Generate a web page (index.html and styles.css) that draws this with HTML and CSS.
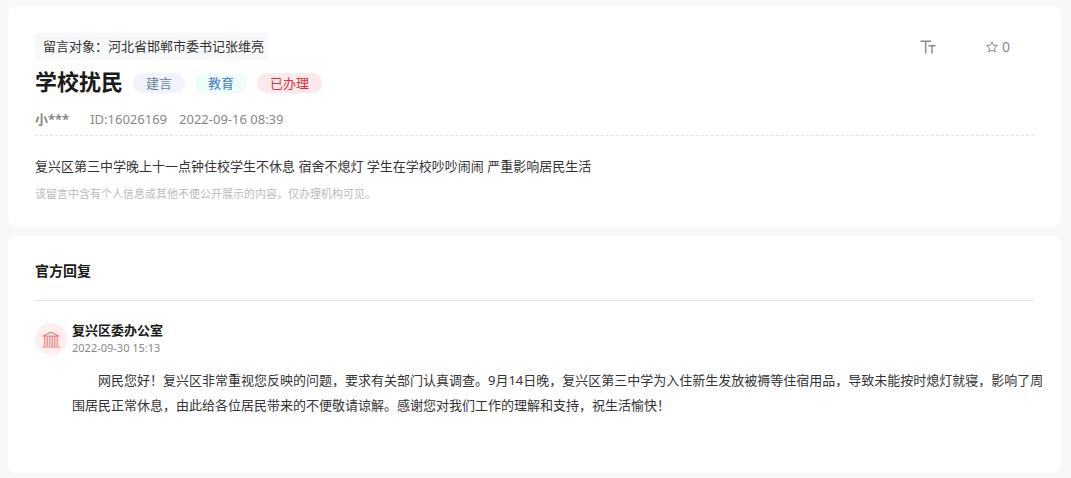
FILE: index.html
```html
<!DOCTYPE html>
<html lang="zh-CN">
<head>
    <meta charset="UTF-8">
    <meta name="viewport" content="width=device-width, initial-scale=1.0">
    <title>学校扰民</title>
    <link rel="stylesheet" href="styles.css">
</head>
<body>
    <main class="page">
        <section class="card message">
            <div class="message-top">
                <p class="target">留言对象：河北省邯郸市委书记张维亮</p>
                <div class="tools">
                    <button type="button" class="tool-btn" aria-label="字号">
                        <svg width="16" height="14" viewBox="0 0 16 14" fill="none" stroke="currentColor" stroke-width="1.4">
                            <path d="M0.5 1.2H11M5.7 1.2V13.5M8.5 5.7H15.5M12 5.7V13.5"/>
                        </svg>
                    </button>
                    <button type="button" class="tool-btn tool-star" aria-label="收藏">
                        <svg width="12" height="12" viewBox="0 0 12 12" fill="none" stroke="currentColor" stroke-linejoin="round">
                            <path d="M6 0.8L7.6 4.1L11.3 4.6L8.6 7.1L9.3 10.9L6 9.1L2.7 10.9L3.4 7.1L0.7 4.6L4.4 4.1Z"/>
                        </svg>
                        <span>0</span>
                    </button>
                </div>
            </div>
            <div class="title-row">
                <h1>学校扰民</h1>
                <span class="tag tag-type">建言</span>
                <span class="tag tag-field">教育</span>
                <span class="tag tag-state">已办理</span>
            </div>
            <div class="meta">
                <span class="user">小***</span>
                <span>ID:16026169</span>
                <span>2022-09-16 08:39</span>
            </div>
            <p class="message-text">复兴区第三中学晚上十一点钟住校学生不休息 宿舍不熄灯 学生在学校吵吵闹闹 严重影响居民生活</p>
            <p class="notice">该留言中含有个人信息或其他不便公开展示的内容，仅办理机构可见。</p>
        </section>

        <section class="card reply">
            <h2>官方回复</h2>
            <div class="reply-item">
                <div class="avatar">
                    <svg width="18" height="17" viewBox="0 0 18 17" fill="none" stroke="currentColor" stroke-width="1.2">
                        <path d="M0.8 5.2L9 1.2L17.2 5.2ZM0 16H18"/>
                        <path d="M2.8 5.5V15.5M5.2 5.5V15.5M7.8 5.5V15.5M10.2 5.5V15.5M12.8 5.5V15.5M15.2 5.5V15.5"/>
                    </svg>
                </div>
                <div class="reply-body">
                    <h3>复兴区委办公室</h3>
                    <time class="reply-time" datetime="2022-09-30T15:13">2022-09-30 15:13</time>
                    <p class="reply-text">网民您好！复兴区非常重视您反映的问题，要求有关部门认真调查。9月14日晚，复兴区第三中学为入住新生发放被褥等住宿用品，导致未能按时熄灯就寝，影响了周围居民正常休息，由此给各位居民带来的不便敬请谅解。感谢您对我们工作的理解和支持，祝生活愉快！</p>
                </div>
            </div>
        </section>
    </main>
</body>
</html>
```
FILE: styles.css
```css
body {
    margin: 0;
    background-color: #f7f8fa;
    font-family: "Noto Sans", "Noto Sans CJK SC", sans-serif;
    font-size: 13px;
    line-height: 20px;
    color: #333;
}

h1, h2, h3, p {
    margin: 0;
}

.page {
    padding: 6px 10px 5px 8px;
    display: flex;
    flex-direction: column;
    gap: 9px;
}

.card {
    background-color: #fff;
    border-radius: 8px;
    padding: 27px;
}

.message {
    padding-bottom: 23px;
}

.message-top {
    display: flex;
    justify-content: space-between;
    align-items: center;
}

.target {
    padding: 3px 4px 4px 8px;
    background-color: #f7f8fa;
    border-radius: 2px;
}

.tools {
    display: flex;
    gap: 50px;
    padding-right: 24px;
}

.tool-btn {
    display: flex;
    align-items: center;
    gap: 4px;
    padding: 0;
    border: none;
    background: none;
    color: #888;
    font: inherit;
    cursor: pointer;
}

.tool-star {
    font-size: 14px;
}

.title-row {
    display: flex;
    align-items: center;
    gap: 10px;
    margin-top: 7px;
}

h1 {
    padding-bottom: 4px;
    font-size: 22px;
    line-height: 28px;
    color: #1a1a1a;
}

.tag {
    padding: 0 13px;
    border-radius: 10px;
}

.tag-type {
    background-color: #f0f4fa;
    color: #6d7f9b;
}

.tag-field {
    background-color: #edfdfa;
    color: #3f78c9;
}

.tag-state {
    background-color: #fce9eb;
    color: #d9333f;
}

.meta {
    display: flex;
    gap: 12px;
    margin-top: 10px;
    padding-bottom: 6px;
    border-bottom: 1px dashed #e3e3e3;
    color: #888;
}

.user {
    margin-right: 9px;
    font-weight: bold;
}

.message-text {
    margin-top: 20px;
}

.notice {
    margin-top: 8px;
    font-size: 11px;
    color: #bbb;
}

h2 {
    padding-bottom: 19px;
    border-bottom: 1px solid #e5e5e5;
    font-size: 14px;
    color: #1a1a1a;
}

.reply {
    padding-top: 25px;
    padding-bottom: 55px;
}

.reply-item {
    display: flex;
    gap: 5px;
    margin-top: 19px;
}

.avatar {
    display: flex;
    flex: none;
    align-items: center;
    justify-content: center;
    width: 32px;
    height: 32px;
    margin-top: 3px;
    border-radius: 50%;
    background-color: #ffeeee;
    color: #e58484;
}

.reply-body {
    flex: 1;
}

h3 {
    font-size: 13px;
    color: #1a1a1a;
}

.reply-time {
    display: block;
    font-size: 11px;
    line-height: 16px;
    color: #888;
}

.reply-text {
    margin: 12px -10px 0 0;
    line-height: 25px;
    text-indent: 2em;
}
```
